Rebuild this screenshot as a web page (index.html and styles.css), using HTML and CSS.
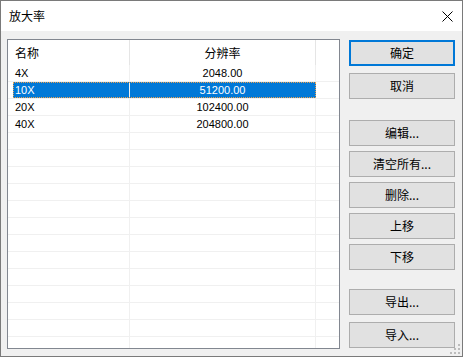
FILE: index.html
```html
<!DOCTYPE html>
<html lang="zh-CN">
<head>
    <meta charset="UTF-8">
    <title>放大率</title>
    <link rel="stylesheet" href="styles.css">
</head>
<body>
<div class="window">
    <div class="titlebar">
        <span class="titlebar__text">放大率</span>
        <svg class="titlebar__close" width="11" height="11" viewBox="0 0 11 11">
            <path d="M0.5 0.5 L10.5 10.5 M10.5 0.5 L0.5 10.5" stroke="#000" stroke-width="1" fill="none"/>
        </svg>
    </div>
    <div class="client">
        <div class="list">
            <div class="list__header">
                <div class="list__cell list__cell--name">名称</div>
                <div class="list__cell list__cell--value">分辨率</div>
                <div class="list__cell list__cell--fill"></div>
            </div>
            <div class="list__row">
                <div class="list__cell list__cell--name">4X</div>
                <div class="list__cell list__cell--value">2048.00</div>
                <div class="list__cell list__cell--fill"></div>
            </div>
            <div class="list__row list__row--selected">
                <div class="list__cell list__cell--name">10X</div>
                <div class="list__cell list__cell--value">51200.00</div>
                <div class="list__cell list__cell--fill"></div>
            </div>
            <div class="list__row">
                <div class="list__cell list__cell--name">20X</div>
                <div class="list__cell list__cell--value">102400.00</div>
                <div class="list__cell list__cell--fill"></div>
            </div>
            <div class="list__row">
                <div class="list__cell list__cell--name">40X</div>
                <div class="list__cell list__cell--value">204800.00</div>
                <div class="list__cell list__cell--fill"></div>
            </div>
            <div class="list__row"><div class="list__cell list__cell--name"></div><div class="list__cell list__cell--value"></div><div class="list__cell list__cell--fill"></div></div>
            <div class="list__row"><div class="list__cell list__cell--name"></div><div class="list__cell list__cell--value"></div><div class="list__cell list__cell--fill"></div></div>
            <div class="list__row"><div class="list__cell list__cell--name"></div><div class="list__cell list__cell--value"></div><div class="list__cell list__cell--fill"></div></div>
            <div class="list__row"><div class="list__cell list__cell--name"></div><div class="list__cell list__cell--value"></div><div class="list__cell list__cell--fill"></div></div>
            <div class="list__row"><div class="list__cell list__cell--name"></div><div class="list__cell list__cell--value"></div><div class="list__cell list__cell--fill"></div></div>
            <div class="list__row"><div class="list__cell list__cell--name"></div><div class="list__cell list__cell--value"></div><div class="list__cell list__cell--fill"></div></div>
            <div class="list__row"><div class="list__cell list__cell--name"></div><div class="list__cell list__cell--value"></div><div class="list__cell list__cell--fill"></div></div>
            <div class="list__row"><div class="list__cell list__cell--name"></div><div class="list__cell list__cell--value"></div><div class="list__cell list__cell--fill"></div></div>
            <div class="list__row"><div class="list__cell list__cell--name"></div><div class="list__cell list__cell--value"></div><div class="list__cell list__cell--fill"></div></div>
            <div class="list__row"><div class="list__cell list__cell--name"></div><div class="list__cell list__cell--value"></div><div class="list__cell list__cell--fill"></div></div>
            <div class="list__row"><div class="list__cell list__cell--name"></div><div class="list__cell list__cell--value"></div><div class="list__cell list__cell--fill"></div></div>
            <div class="list__row"><div class="list__cell list__cell--name"></div><div class="list__cell list__cell--value"></div><div class="list__cell list__cell--fill"></div></div>
            <div class="list__row"><div class="list__cell list__cell--name"></div><div class="list__cell list__cell--value"></div><div class="list__cell list__cell--fill"></div></div>
        </div>
        <div class="actions">
            <button class="btn btn--default">确定</button>
            <button class="btn btn--cancel">取消</button>
            <button class="btn btn--edit">编辑...</button>
            <button class="btn btn--tight">清空所有...</button>
            <button class="btn btn--tight">删除...</button>
            <button class="btn btn--tight">上移</button>
            <button class="btn btn--tight">下移</button>
            <button class="btn btn--export">导出...</button>
            <button class="btn btn--cancel">导入...</button>
        </div>
    </div>
    <svg class="grip" width="10" height="10" viewBox="0 0 10 10">
        <rect x="8" y="0" width="2" height="2" fill="#bcbcbc"/>
        <rect x="4" y="4" width="2" height="2" fill="#bcbcbc"/>
        <rect x="8" y="4" width="2" height="2" fill="#bcbcbc"/>
        <rect x="0" y="8" width="2" height="2" fill="#bcbcbc"/>
        <rect x="4" y="8" width="2" height="2" fill="#bcbcbc"/>
        <rect x="8" y="8" width="2" height="2" fill="#bcbcbc"/>
    </svg>
</div>
</body>
</html>
```

FILE: styles.css
```css
html,
body {
    margin: 0;
    padding: 0;
    background: #fff;
}

.window {
    position: relative;
    display: flex;
    flex-direction: column;
    box-sizing: border-box;
    width: 463px;
    height: 357px;
    border: 1px solid #7a7a7a;
    background: #f0f0f0;
    font-family: "Noto Sans CJK SC", sans-serif;
    font-size: 12px;
    color: #000;
}

.titlebar {
    display: flex;
    justify-content: space-between;
    align-items: center;
    height: 30px;
    padding: 0 9px 0 8px;
    background: #fff;
}

.titlebar__text {
    line-height: 16px;
}

.client {
    display: flex;
    gap: 9px;
    padding: 8px 0 0 6px;
}

.list {
    box-sizing: border-box;
    width: 333px;
    height: 310px;
    border: 1px solid #828790;
    background: #fff;
    overflow: hidden;
}

.list__header,
.list__row {
    position: relative;
    display: flex;
}

.list__header {
    height: 25px;
}

.list__header .list__cell {
    border-right-color: #e5e5e5;
}

.list__row {
    box-sizing: border-box;
    height: 17px;
    border-bottom: 1px solid #f0f0f0;
    font-family: "Liberation Sans", "Noto Sans CJK SC", sans-serif;
    font-size: 11px;
}

.list__cell {
    display: flex;
    align-items: center;
    box-sizing: border-box;
    border-right: 1px solid #f0f0f0;
    line-height: 14px;
}

.list__cell--name {
    width: 122px;
    padding-left: 7px;
}

.list__cell--value {
    justify-content: center;
    width: 186px;
}

.list__cell--fill {
    flex: 1;
    border-right: none;
}

.list__row--selected {
    color: #fff;
}

.list__row--selected .list__cell--name {
    background: linear-gradient(to right, transparent 5px, #0078d7 5px);
}

.list__row--selected .list__cell--value {
    background: #0078d7;
    border-right-color: #0078d7;
}

.list__row--selected::after {
    content: "";
    position: absolute;
    left: 5px;
    top: 0;
    width: 303px;
    height: 16px;
    box-sizing: border-box;
    border: 1px dotted #e8a050;
}

.actions {
    display: flex;
    flex-direction: column;
    width: 106px;
    padding-top: 1px;
}

.btn {
    box-sizing: border-box;
    height: 26px;
    margin: 0;
    padding: 0;
    border: 1px solid #adadad;
    background: #e1e1e1;
    font-family: "Noto Sans CJK SC", sans-serif;
    font-size: 12px;
    line-height: 16px;
    color: #000;
}

.btn--default {
    border: 2px solid #0078d7;
}

.btn--cancel {
    margin-top: 7px;
}

.btn--edit {
    margin-top: 21px;
}

.btn--tight {
    margin-top: 5px;
}

.btn--export {
    margin-top: 19px;
}

.grip {
    position: absolute;
    right: 2px;
    bottom: 2px;
}
```
